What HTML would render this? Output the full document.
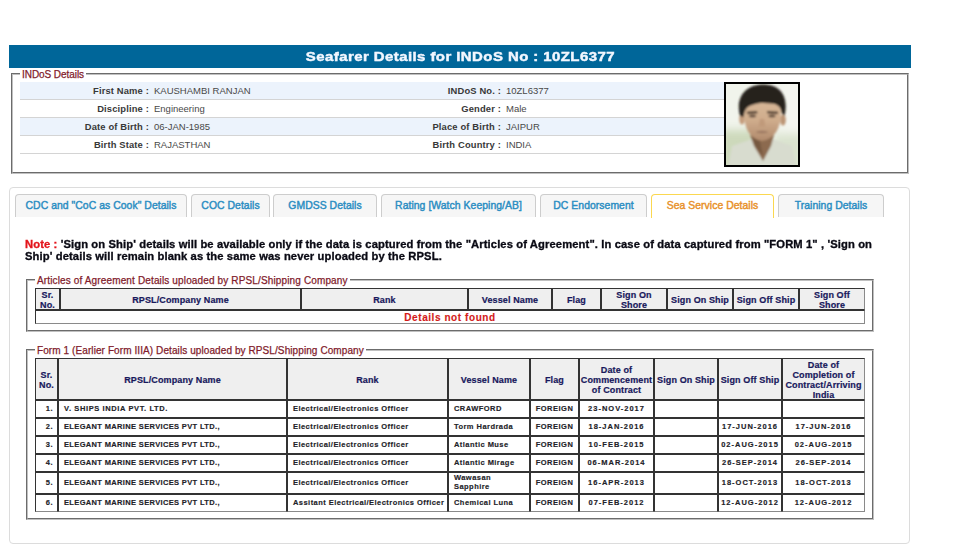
<!DOCTYPE html>
<html>
<head>
<meta charset="utf-8">
<style>
html,body{margin:0;padding:0;background:#fff;}
body{width:966px;height:549px;overflow:hidden;position:relative;font-family:"Liberation Sans",sans-serif;}
.abs{position:absolute;}
#bar{left:9px;top:45px;width:902px;height:23px;background:#006699;color:#f2f7ff;font-weight:bold;font-size:13px;letter-spacing:0.38px;text-align:center;line-height:23px;white-space:nowrap;-webkit-text-stroke:0.45px #f2f7ff;}
#bar span{display:inline-block;transform:scaleX(1.15);}
.fs{position:absolute;border:2px groove #c0c0c0;box-sizing:border-box;}
.lg{position:absolute;background:#fff;color:#821c2c;font-size:10px;white-space:nowrap;padding:0 2px;line-height:12px;-webkit-text-stroke:0.25px #821c2c;}
#info{left:20px;top:82px;width:704px;border-collapse:separate;border-spacing:0;table-layout:fixed;}
#info td{height:17px;padding:0;white-space:nowrap;border-bottom:1px solid #d4d4d4;box-sizing:content-box;line-height:17px;}
#info tr.z td{background:#ecf3fc;}
#info td.l{text-align:right;color:#383838;font-weight:bold;font-size:9.4px;letter-spacing:0.15px;padding-right:1px;}
#info td.v{color:#484848;font-size:9.5px;padding-left:4px;}
#photo{left:724px;top:82px;width:72px;height:81px;border:2px solid #000;overflow:hidden;background:#e4ebdc;}
#panel{left:9px;top:187px;width:901px;height:357px;box-sizing:border-box;border:1px solid #dcdcdc;border-radius:4px;}
.tab{position:absolute;top:194px;height:23px;box-sizing:border-box;border:1px solid #cdcdcd;border-bottom:none;border-radius:4px 4px 0 0;background:#f6f6f6;color:#2a8dc2;font-weight:normal;font-size:10.4px;letter-spacing:0.05px;text-align:center;line-height:22px;white-space:nowrap;-webkit-text-stroke:0.42px #2a8dc2;}
.tab.act{background:#fff;border-color:#fbd850;color:#e8912a;height:24px;-webkit-text-stroke:0.42px #e8912a;}
#note{left:25px;top:239px;width:880px;font-size:10px;font-weight:bold;letter-spacing:0.1px;line-height:12px;color:#0a0a14;white-space:nowrap;-webkit-text-stroke:0.3px #0a0a14;}
#note .ln{display:inline-block;transform-origin:0 0;transform:scaleX(1.12);}
#note .r{color:#e3141b;-webkit-text-stroke:0.3px #e3141b;}
table.g{position:absolute;border-collapse:separate;border-spacing:0;table-layout:fixed;}
table.g td{border:1px solid #333;padding:0;box-sizing:border-box;font-weight:bold;}
table.g tr.h td{background:#efefef;color:#18185c;font-size:9px;letter-spacing:0.12px;text-align:center;line-height:10px;-webkit-text-stroke:0.2px #18185c;}
table.g tr.h td span{position:relative;top:0.7px;}
table.g tr.last td{border-bottom-color:#8a8a8a;}
table.g td.rc{border-right-color:#8a8a8a;}
table.g tr.d td{font-size:7.5px;color:#222228;letter-spacing:0.45px;line-height:9px;white-space:nowrap;-webkit-text-stroke:0.15px #222228;}
table.g tr.d td span{position:relative;top:-0.6px;}
table.g td.sr{text-align:right;padding-right:4px;}
table.g td.lt{text-align:left;padding-left:5px;}
table.g td.ct{text-align:center;}
table.g td.dt{letter-spacing:1.0px !important;}
table.g td.fl{letter-spacing:0.5px !important;}
table.g td.rp{letter-spacing:0.35px !important;}
table.g tr.nf td{color:#d41a1a;font-size:10px;letter-spacing:0.57px;text-align:center;line-height:12px;-webkit-text-stroke:0.15px #d41a1a;}
</style>
</head>
<body>
<div id="bar" class="abs"><span>Seafarer Details for INDoS No : 10ZL6377</span></div>

<div class="fs" style="left:11px;top:73px;width:898px;height:101px;"></div>
<div class="lg" style="left:20px;top:69px;letter-spacing:-0.06px;">INDoS Details</div>

<table id="info" class="abs">
<colgroup><col style="width:130px"><col style="width:252px"><col style="width:100px"><col style="width:222px"></colgroup>
<tr class="z"><td class="l">First Name :</td><td class="v">KAUSHAMBI RANJAN</td><td class="l">INDoS No. :</td><td class="v">10ZL6377</td></tr>
<tr><td class="l">Discipline :</td><td class="v">Engineering</td><td class="l">Gender :</td><td class="v">Male</td></tr>
<tr class="z"><td class="l">Date of Birth :</td><td class="v">06-JAN-1985</td><td class="l">Place of Birth :</td><td class="v">JAIPUR</td></tr>
<tr><td class="l">Birth State :</td><td class="v">RAJASTHAN</td><td class="l">Birth Country :</td><td class="v">INDIA</td></tr>
</table>

<div id="photo" class="abs"><svg width="72" height="81" viewBox="0 0 72 81">
<defs>
<filter id="bl" x="-20%" y="-20%" width="140%" height="140%"><feGaussianBlur stdDeviation="1.2"/></filter>
<filter id="bl2" x="-50%" y="-50%" width="200%" height="200%"><feGaussianBlur stdDeviation="4"/></filter>
<linearGradient id="face" x1="0" y1="0" x2="0" y2="1"><stop offset="0" stop-color="#d8b898"/><stop offset="0.5" stop-color="#cfac8c"/><stop offset="1" stop-color="#b08a6c"/></linearGradient>
</defs>
<rect x="-2" y="-2" width="76" height="85" fill="#f1f4ec"/>
<g filter="url(#bl2)">
<rect x="-6" y="46" width="38" height="45" fill="#cdd9bb"/>
<rect x="48" y="50" width="30" height="40" fill="#dae3cf"/>
<rect x="56" y="-5" width="20" height="50" fill="#f4f5f0"/>
</g>
<g filter="url(#bl)">
<path d="M6 62 L26 55 L36 66 L47 55 L66 62 L70 82 L2 82 Z" fill="#d8dccf"/>
<path d="M24 51 L48 51 L45 62 L37 77 L28 62 Z" fill="#8c6a50"/>
<path d="M26 53 L33 53 L37 72 L29 62 Z" fill="#76583f"/>
<ellipse cx="16" cy="35" rx="2.8" ry="5.5" fill="#c49c7c"/>
<ellipse cx="57" cy="36" rx="2.8" ry="5.5" fill="#bc9474"/>
<path d="M18 29 C18 45 24 55 36 57 C48 55 55 45 55 29 C55 19 48 16 36 16 C25 16 18 19 18 29 Z" fill="url(#face)"/>
<path d="M14 32 C9 13 20 0.5 37 0.5 C55 0.5 63 13 58.5 32 L55.5 29 C55 23 52 20 45 19.5 C39 18.5 31 18.5 26 21 C20 23 18.5 26 17.5 33 Z" fill="#25201c"/>
<path d="M21 27.8 L31 27 L31.5 29.2 L21 30 Z" fill="#3a2a20"/>
<path d="M41 27 L52 27.8 L52 30 L41 29.2 Z" fill="#3a2a20"/>
<ellipse cx="26.5" cy="32" rx="3.6" ry="1.3" fill="#4e3a2e"/>
<ellipse cx="46" cy="32" rx="3.6" ry="1.3" fill="#4e3a2e"/>
<path d="M34 35 L38 35 L39.5 42.5 L32.5 42.5 Z" fill="#c09a7a"/>
<ellipse cx="36" cy="48" rx="6" ry="1.2" fill="#9a7660"/>
</g>
</svg></div>

<div id="panel" class="abs"></div>
<div class="tab" style="left:15px;width:172px;">CDC and "CoC as Cook" Details</div>
<div class="tab" style="left:191px;width:79px;">COC Details</div>
<div class="tab" style="left:273px;width:104px;">GMDSS Details</div>
<div class="tab" style="left:381px;width:155px;">Rating [Watch Keeping/AB]</div>
<div class="tab" style="left:540px;width:107px;">DC Endorsement</div>
<div class="tab act" style="left:651px;width:123px;">Sea Service Details</div>
<div class="tab" style="left:778px;width:106px;">Training Details</div>

<div id="note" class="abs"><span class="ln"><span class="r">Note :</span> 'Sign on Ship' details will be available only if the data is captured from the "Articles of Agreement". In case of data captured from "FORM 1" , 'Sign on</span><br><span class="ln">Ship' details will remain blank as the same was never uploaded by the RPSL.</span></div>

<div class="fs" style="left:26px;top:279px;width:848px;height:53px;"></div>
<div class="lg" style="left:35px;top:275px;letter-spacing:0.14px;">Articles of Agreement Details uploaded by RPSL/Shipping Company</div>

<div class="fs" style="left:26px;top:349px;width:848px;height:171px;"></div>
<div class="lg" style="left:35px;top:345px;letter-spacing:0.09px;">Form 1 (Earlier Form IIIA) Details uploaded by RPSL/Shipping Company</div>

<table class="g" id="art" style="left:35px;top:288px;width:830px;">
<colgroup><col style="width:25px"><col style="width:241px"><col style="width:167px"><col style="width:84px"><col style="width:49px"><col style="width:66px"><col style="width:66px"><col style="width:66px"><col style="width:66px"></colgroup>
<tr class="h" style="height:22px"><td><span>Sr.<br>No.</span></td><td><span>RPSL/Company Name</span></td><td><span>Rank</span></td><td><span>Vessel Name</span></td><td><span>Flag</span></td><td><span>Sign On<br>Shore</span></td><td><span>Sign On Ship</span></td><td><span>Sign Off Ship</span></td><td class="rc"><span>Sign Off<br>Shore</span></td></tr>
<tr class="last nf" style="height:14px"><td colspan="9" class="rc"><span style="position:relative;top:1px">Details not found</span></td></tr>
</table>
<table class="g" id="f1" style="left:35px;top:358px;width:830px;">
<colgroup><col style="width:23px"><col style="width:229px"><col style="width:161px"><col style="width:82px"><col style="width:49px"><col style="width:75px"><col style="width:64px"><col style="width:64px"><col style="width:83px"></colgroup>
<tr class="h" style="height:42px"><td><span>Sr.<br>No.</span></td><td><span>RPSL/Company Name</span></td><td><span>Rank</span></td><td><span>Vessel Name</span></td><td><span>Flag</span></td><td><span>Date of<br>Commencement<br>of Contract</span></td><td><span>Sign On Ship</span></td><td><span>Sign Off Ship</span></td><td class="rc"><span>Date of<br>Completion of<br>Contract/Arriving<br>India</span></td></tr>
<tr class="d" style="height:18px"><td class="sr"><span>1.</span></td><td class="lt rp" style="letter-spacing:0.61px !important"><span>V. SHIPS INDIA PVT. LTD.</span></td><td class="lt"><span>Electrical/Electronics Officer</span></td><td class="lt"><span>CRAWFORD</span></td><td class="fl ct"><span>FOREIGN</span></td><td class="dt ct"><span>23-NOV-2017</span></td><td class="dt ct"></td><td class="dt ct"></td><td class="dt ct rc"></td></tr>
<tr class="d" style="height:18px"><td class="sr"><span>2.</span></td><td class="lt rp"><span>ELEGANT MARINE SERVICES PVT LTD.,</span></td><td class="lt"><span>Electrical/Electronics Officer</span></td><td class="lt"><span>Torm Hardrada</span></td><td class="fl ct"><span>FOREIGN</span></td><td class="dt ct"><span>18-JAN-2016</span></td><td class="dt ct"></td><td class="dt ct"><span>17-JUN-2016</span></td><td class="dt ct rc"><span>17-JUN-2016</span></td></tr>
<tr class="d" style="height:18px"><td class="sr"><span>3.</span></td><td class="lt rp"><span>ELEGANT MARINE SERVICES PVT LTD.,</span></td><td class="lt"><span>Electrical/Electronics Officer</span></td><td class="lt"><span>Atlantic Muse</span></td><td class="fl ct"><span>FOREIGN</span></td><td class="dt ct"><span>10-FEB-2015</span></td><td class="dt ct"></td><td class="dt ct"><span>02-AUG-2015</span></td><td class="dt ct rc"><span>02-AUG-2015</span></td></tr>
<tr class="d" style="height:18px"><td class="sr"><span>4.</span></td><td class="lt rp"><span>ELEGANT MARINE SERVICES PVT LTD.,</span></td><td class="lt"><span>Electrical/Electronics Officer</span></td><td class="lt"><span>Atlantic Mirage</span></td><td class="fl ct"><span>FOREIGN</span></td><td class="dt ct"><span>06-MAR-2014</span></td><td class="dt ct"></td><td class="dt ct"><span>26-SEP-2014</span></td><td class="dt ct rc"><span>26-SEP-2014</span></td></tr>
<tr class="d" style="height:22px"><td class="sr"><span>5.</span></td><td class="lt rp"><span>ELEGANT MARINE SERVICES PVT LTD.,</span></td><td class="lt"><span>Electrical/Electronics Officer</span></td><td class="lt"><span>Wawasan<br>Sapphire</span></td><td class="fl ct"><span>FOREIGN</span></td><td class="dt ct"><span>16-APR-2013</span></td><td class="dt ct"></td><td class="dt ct"><span>18-OCT-2013</span></td><td class="dt ct rc"><span>18-OCT-2013</span></td></tr>
<tr class="d last" style="height:18px"><td class="sr"><span>6.</span></td><td class="lt rp"><span>ELEGANT MARINE SERVICES PVT LTD.,</span></td><td class="lt"><span>Assitant Electrical/Electronics Officer</span></td><td class="lt"><span>Chemical Luna</span></td><td class="fl ct"><span>FOREIGN</span></td><td class="dt ct"><span>07-FEB-2012</span></td><td class="dt ct"></td><td class="dt ct"><span>12-AUG-2012</span></td><td class="dt ct rc"><span>12-AUG-2012</span></td></tr>
</table>
</body>
</html>
